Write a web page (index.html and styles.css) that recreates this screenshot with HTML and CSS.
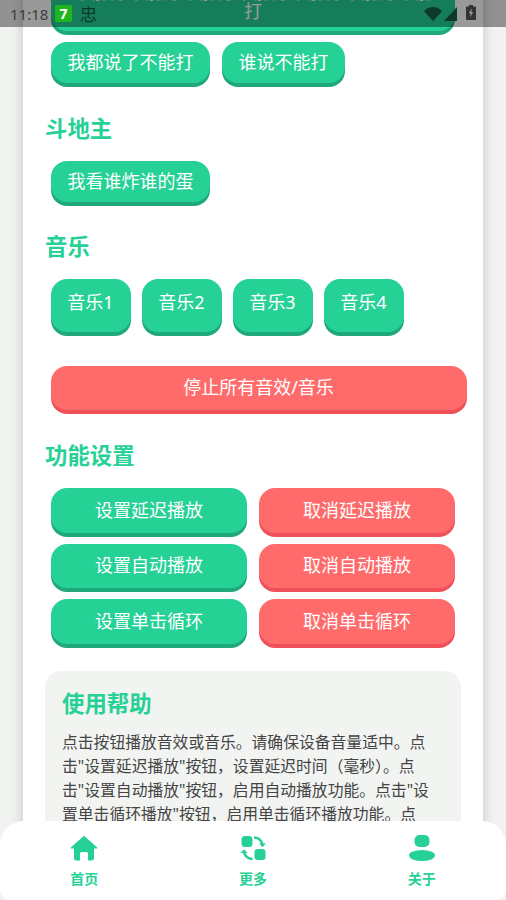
FILE: index.html
```html
<!DOCTYPE html>
<html>
<head>
    <meta charset="utf-8">
    <title>音效板</title>
    <link rel="stylesheet" href="styles.css">
</head>
<body>
    <!-- 状态栏 -->
    <div class="status-bar">
        <span class="status-time">11:18</span>
        <span class="status-app">7</span>
        <span class="status-note">忠</span>
        <span class="status-icons">
            <svg class="icon-wifi" width="18" height="14" viewBox="0 0 18 14"><path d="M0 4.2C2.2 1.6 5.4 0 9 0s6.800 1.600 9 4.200L9 14z"/></svg>
            <svg class="icon-signal" width="13" height="14" viewBox="0 0 13 14"><path d="M13 0v14H0z"/></svg>
            <svg class="icon-battery" width="10" height="15" viewBox="0 0 10 15"><path d="M3 0h4v1.500h2a1 1 0 0 1 1 1V14a1 1 0 0 1-1 1H1a1 1 0 0 1-1-1V2.500a1 1 0 0 1 1-1h2z"/><path d="M5.800 3 2.800 8.300h1.800L4 12.500l3.200-5.500H5.300z" fill="#9a9a9a"/></svg>
        </span>
    </div>

    <div class="card">
        <div class="btn-row">
            <div class="btn btn-long">不能打不能打不能打不能打不能打不能打不能打</div>
            <div class="btn">我都说了不能打</div>
            <div class="btn">谁说不能打</div>
        </div>

        <div class="section-title">斗地主</div>
        <div class="btn-row">
            <div class="btn">我看谁炸谁的蛋</div>
        </div>

        <div class="section-title">音乐</div>
        <div class="btn-row">
            <div class="btn btn-music">音乐1</div>
            <div class="btn btn-music">音乐2</div>
            <div class="btn btn-music">音乐3</div>
            <div class="btn btn-music">音乐4</div>
        </div>

        <div class="btn btn-red btn-stop">停止所有音效/音乐</div>

        <div class="section-title">功能设置</div>
        <div class="btn-row">
            <div class="btn btn-half">设置延迟播放</div>
            <div class="btn btn-half btn-red">取消延迟播放</div>
            <div class="btn btn-half">设置自动播放</div>
            <div class="btn btn-half btn-red">取消自动播放</div>
            <div class="btn btn-half">设置单击循环</div>
            <div class="btn btn-half btn-red">取消单击循环</div>
        </div>

        <div class="help-box">
            <div class="help-title">使用帮助</div>
            <div class="help-text">点击按钮播放音效或音乐。请确保设备音量适中。点击"设置延迟播放"按钮，设置延迟时间（毫秒）。点击"设置自动播放"按钮，启用自动播放功能。点击"设置单击循环播放"按钮，启用单击循环播放功能。点击"停止所有音效/音乐"按钮，停止播放。</div>
        </div>
    </div>

    <!-- 底部导航 -->
    <div class="tabbar">
        <div class="tabbar-item">
            <svg class="tabbar-icon" width="28" height="26" viewBox="0 0 28 26"><path d="M14 .8 27.200 12.600a.6.6 0 0 1-.4 1H24v10a1.800 1.800 0 0 1-1.800 1.800H18v-7a1.500 1.500 0 0 0-1.500-1.500h-5A1.500 1.500 0 0 0 10 18.400v7H5.800A1.800 1.800 0 0 1 4 23.600v-10H1.200a.6.6 0 0 1-.4-1z"/></svg>
            首页
        </div>
        <div class="tabbar-item">
            <svg class="tabbar-icon" width="28" height="26" viewBox="0 0 28 26">
                <rect x="2.500" y="1" width="11" height="11" rx="3.500"/>
                <rect x="15.500" y="14" width="11" height="11" rx="3"/>
                <path class="icon-line" d="M15 2.500c4 0 7 2.300 8.500 6.500M13.500 24c-4 0-7-2.300-8.500-6.500"/>
                <path d="M20 8.500h7l-3.500 3.800zM1.500 18l3.500-3.800L8.500 18z"/>
            </svg>
            更多
        </div>
        <div class="tabbar-item">
            <svg class="tabbar-icon" width="28" height="26" viewBox="0 0 28 26">
                <rect x="6.500" y="0" width="15" height="12" rx="5"/>
                <ellipse cx="14" cy="20.500" rx="13" ry="5.500"/>
            </svg>
            关于
        </div>
    </div>
</body>
</html>
```

FILE: styles.css
```css
body {
    font-family: "Noto Sans", "Noto Sans CJK SC", sans-serif;
    margin: 0;
    padding: 0;
    height: 900px;
    overflow: hidden;
    position: relative;
    background-color: #f1f3f1;
    color: #444;
}
.status-bar {
    position: absolute;
    top: 0;
    left: 0;
    right: 0;
    height: 27px;
    background: rgba(0,0,0,0.4);
    display: flex;
    align-items: center;
    padding: 0 30px 0 10px;
    z-index: 20;
}
.status-time {
    font-size: 15px;
    color: #3d3d3d;
    width: 45px;
}
.status-app {
    width: 17px;
    height: 17px;
    border-radius: 2px;
    background: #1fb51f;
    color: #fff;
    font-size: 14px;
    font-weight: bold;
    line-height: 17px;
    text-align: center;
}
.status-note {
    font-size: 17px;
    color: #0c3a2a;
    margin-left: 8px;
}
.status-icons {
    margin-left: auto;
    display: flex;
    align-items: center;
    gap: 2px;
}
.icon-wifi, .icon-signal {
    fill: #0c3a2a;
}
.icon-battery {
    fill: #333;
    margin-left: 7px;
    margin-bottom: 2px;
}
.card {
    margin: -30.25px 23px 0;
    padding: 0 22px 40px;
    background: #fff;
    box-shadow: 0 0 12px rgba(0,0,0,0.2);
}
.btn-row {
    display: flex;
    flex-wrap: wrap;
}
.btn {
    margin: 5.5px 6px;
    padding: 8px 16.5px;
    font-size: 18px;
    line-height: 25px;
    color: #fff;
    text-align: center;
    background: #26d196;
    border-radius: 16px;
    box-shadow: 0 4px 0 #1fa97b;
}
.btn-red {
    background: #ff6b6b;
    box-shadow: 0 4px 0 #f0505a;
}
.btn-long {
    width: 404px;
    box-sizing: border-box;
    padding-bottom: 10.75px;
    line-height: 18.5px;
}
.btn-music {
    min-width: 80px;
    box-sizing: border-box;
    margin: 5.5px;
    padding-top: 10.5px;
    padding-bottom: 17.5px;
}
.btn-stop {
    margin: 28.5px 0 30px 5.5px;
    padding-top: 9px;
    padding-bottom: 10px;
    width: 100%;
    box-sizing: border-box;
}
.btn-half {
    width: 196px;
    box-sizing: border-box;
    padding-top: 9.5px;
    padding-bottom: 10px;
}
.section-title {
    font-size: 22.4px;
    font-weight: bold;
    line-height: 32px;
    color: #26d196;
    margin: 24px 0 10.5px;
}
.help-box {
    margin-top: 22px;
    padding: 17px;
    background: #f2f4f2;
    border-radius: 16px;
}
.help-title {
    font-size: 22.4px;
    font-weight: bold;
    line-height: 32px;
    color: #26d196;
    margin-bottom: 10px;
}
.help-text {
    font-size: 15.8px;
    line-height: 24px;
}
.tabbar {
    position: absolute;
    left: 0;
    right: 0;
    bottom: 0;
    height: 79px;
    background: #fff;
    border-radius: 24px 24px 10px 10px;
    display: flex;
    z-index: 10;
}
.tabbar-item {
    flex: 1;
    display: flex;
    flex-direction: column;
    align-items: center;
    padding-top: 14px;
    color: #26d196;
    font-size: 14px;
    font-weight: bold;
    line-height: 20px;
}
.tabbar-icon {
    fill: #26d196;
    margin-bottom: 8px;
}
.icon-line {
    fill: none;
    stroke: #26d196;
    stroke-width: 2.400;
}
```
